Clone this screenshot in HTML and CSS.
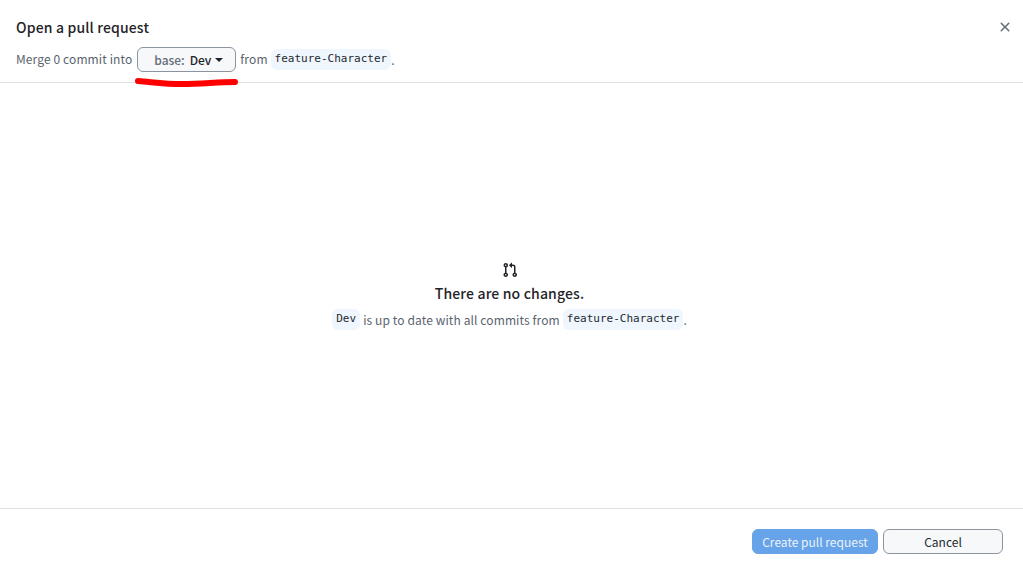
FILE: index.html
```html
<!DOCTYPE html>
<html lang="en">
<head>
<meta charset="utf-8">
<title>Open a pull request</title>
<link rel="stylesheet" href="styles.css">
</head>
<body>
<div class="dialog">
  <header class="header">
    <div class="title-row">
      <h1 class="title">Open a pull request</h1>
      <button class="close" aria-label="Close">
        <svg width="16" height="16" viewBox="0 0 16 16"><path d="M3.720 3.720a.75.75 0 0 1 1.060 0L8 6.940l3.220-3.220a.75.75 0 1 1 1.060 1.060L9.060 8l3.220 3.220a.75.75 0 1 1-1.060 1.060L8 9.060l-3.220 3.220a.75.75 0 0 1-1.060-1.060L6.940 8 3.720 4.780a.75.75 0 0 1 0-1.060Z"/></svg>
      </button>
    </div>
    <div class="sub-row">
      <span class="wide">Merge 0 commit into</span>
      <button class="base-btn"><span class="base-label">base:</span> <span class="base-name">Dev</span><span class="caret"></span></button>
      <span class="wide">from</span>
      <code class="ref">feature-Character</code><span class="dot">.</span>
    </div>
    <svg class="scribble" width="110" height="12" viewBox="0 0 110 12"><path d="M6 5 C 20 6, 32 8, 50 8 C 70 8, 85 6, 103 6" /></svg>
  </header>
  <main class="body">
    <svg class="pr-icon" width="16" height="16" viewBox="0 0 16 16"><path d="M1.500 3.250a2.250 2.250 0 1 1 3 2.122v5.256a2.251 2.251 0 1 1-1.500 0V5.372A2.250 2.250 0 0 1 1.500 3.250Zm5.677-.177L9.573.677A.25.25 0 0 1 10 .854V2.500h1A2.500 2.500 0 0 1 13.500 5v5.628a2.251 2.251 0 1 1-1.500 0V5a1 1 0 0 0-1-1h-1v1.646a.25.25 0 0 1-.427.177L7.177 3.427a.25.25 0 0 1 0-.354ZM3.750 2.500a.75.75 0 1 0 0 1.500.75.75 0 0 0 0-1.500Zm0 9.500a.75.75 0 1 0 0 1.500.75.75 0 0 0 0-1.500Zm8.250.750a.75.75 0 1 0 1.500 0 .75.75 0 0 0-1.500 0Z"/></svg>
    <h2 class="empty-title">There are no changes.</h2>
    <p class="empty-text"><code class="ref">Dev</code> <span class="wide">is up to date with all commits from</span> <code class="ref">feature-Character</code><span class="dot">.</span></p>
  </main>
  <footer class="footer">
    <button class="btn btn-primary">Create pull request</button>
    <button class="btn btn-default">Cancel</button>
  </footer>
</div>
</body>
</html>
```
FILE: styles.css
```css
* { box-sizing: border-box; }
html, body { margin: 0; height: 100%; }
body {
  background: #fff;
  color: #1f2328;
  font-family: "Noto Sans CJK KR", "Noto Sans", sans-serif;
  font-size: 12px;
}
button { font-family: inherit; cursor: pointer; }
.dialog { display: flex; flex-direction: column; height: 572px; }
.header {
  position: relative;
  height: 83px;
  padding: 16px 16px 0;
  border-bottom: 1px solid #dfe1e7;
  flex: none;
}
.title-row { display: flex; justify-content: space-between; align-items: center; height: 22px; }
.title { margin: 0; font-size: 14px; font-weight: 500; line-height: 21px; letter-spacing: 0.15px; color: #1f2328; }
.close { border: 0; background: none; padding: 0; width: 16px; height: 16px; margin-right: -6px; display: flex; }
.close svg { fill: #636c76; }
.sub-row { display: flex; align-items: center; margin-top: 8px; height: 26px; color: #59636e; line-height: 25px; }
.wide { letter-spacing: 0.11px; position: relative; top: -0.5px; }
.base-btn {
  height: 25px;
  width: 99px;
  margin: 0 4px 0 5px;
  padding: 0 0 0 4px;
  border: 1px solid #8c959f;
  border-radius: 6px;
  background: #f6f8fa;
  font-size: 12px;
  font-weight: 500;
  display: flex;
  align-items: center;
  justify-content: center;
  gap: 5px;
}
.base-label { color: #656d76; }
.base-name { color: #1f2328; }
.caret {
  width: 0;
  height: 0;
  margin: 2px 0 0 -1px;
  border-top: 4px solid #1f2328;
  border-left: 4px solid transparent;
  border-right: 4px solid transparent;
}
.ref {
  font-family: "DejaVu Sans Mono", "Liberation Mono", monospace;
  font-size: 11px;
  line-height: 20px;
  height: 21px;
  display: inline-block;
  padding: 0 4px;
  margin-left: 3px;
  border-radius: 6px;
  background: #f0f6fd;
  color: #24292f;
}
.scribble { position: absolute; left: 132px; top: 76px; fill: none; stroke: #f00; stroke-width: 6px; stroke-linecap: round; }
.body {
  flex: 1;
  display: flex;
  flex-direction: column;
  align-items: center;
  padding: 179px 4px 0 0;
}
.pr-icon { fill: #1f2328; }
.empty-title { margin: 5px 0 0; font-size: 14px; font-weight: 500; line-height: 20px; color: #1f2328; letter-spacing: 0.15px; }
.empty-text { display: flex; align-items: center; gap: 3px; margin: 6px 0 0; height: 21px; color: #59636e; line-height: 21px; }
.empty-text .ref { margin-left: 0; }
.empty-text .dot { margin-left: -3px; }
.footer {
  height: 64px;
  flex: none;
  border-top: 1px solid #dfe1e7;
  display: flex;
  justify-content: flex-end;
  align-items: flex-start;
  gap: 5px;
  padding: 20px 20px 0 0;
}
.btn { height: 25px; border-radius: 6px; font-size: 12px; padding: 0; font-weight: 400; }
.btn-primary { width: 126px; background: #67a3e8; border: 1px solid #67a3e8; color: #eaf2fb; }
.btn-default { width: 120px; background: #f6f8fa; border: 1px solid #8c959f; color: #24292f; }
```
